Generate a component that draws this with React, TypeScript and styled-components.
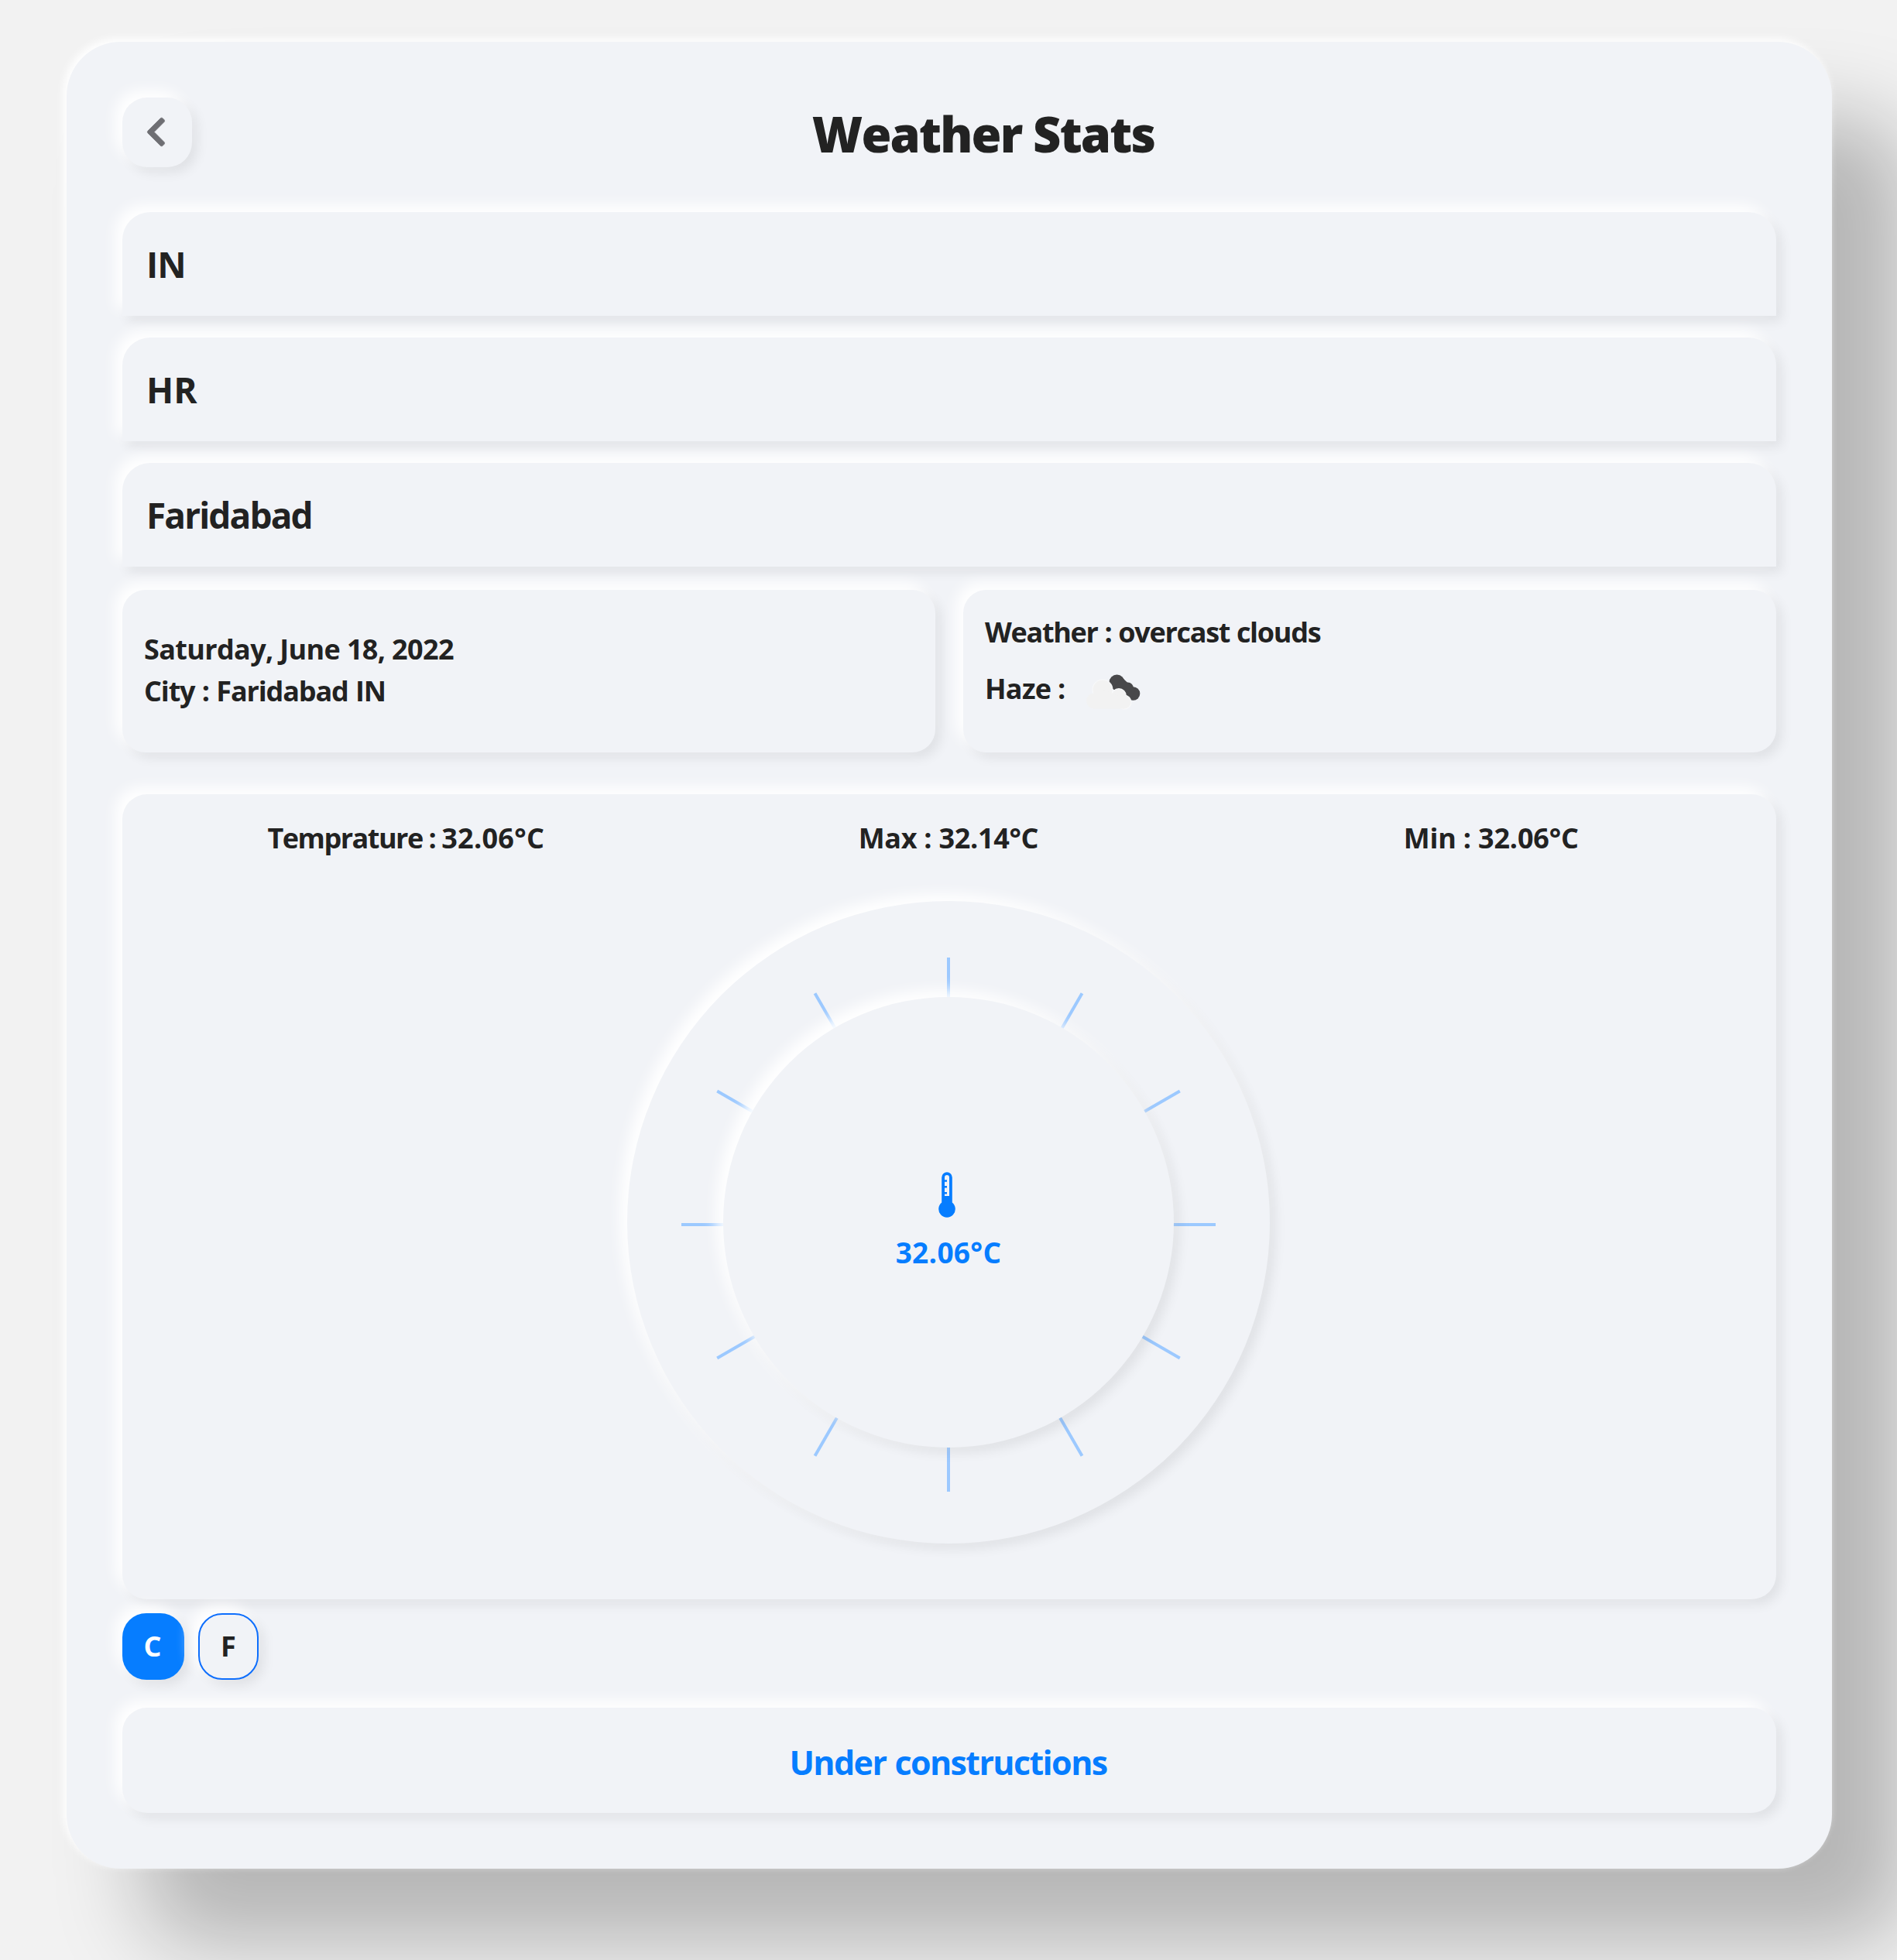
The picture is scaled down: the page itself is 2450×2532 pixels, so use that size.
import React from "react";
import styled, { createGlobalStyle, css } from "styled-components";
import { FaChevronLeft } from "react-icons/fa";

const surface = "#f1f3f7";
const ink = "#222222";
const blue = "#067dff";

const raised = css`
  background: ${surface};
  box-shadow: -9px -9px 18px #ffffff, 7px 7px 15px rgba(0, 0, 0, 0.075);
`;

const GlobalStyle = createGlobalStyle`
  *, *::before, *::after { box-sizing: border-box; }
  html, body { margin: 0; background: #f2f2f2; overflow: hidden; }
  body { font-family: "Open Sans", "Noto Sans", sans-serif; color: ${ink}; }
  h1, h2, p { margin: 0; }
`;

const Page = styled.main`
  height: 2532px;
  padding: 54px 84px 118px 86px;
`;

const Card = styled.section`
  display: flex;
  flex-direction: column;
  height: 2360px;
  padding: 72px;
  border-radius: 70px;
  background: ${surface};
  box-shadow: -4px -4px 11px #ffffff, 98px 98px 112px rgba(0, 0, 0, 0.25);
`;

const Header = styled.header`
  display: flex;
  align-items: center;
  height: 90px;
  margin-bottom: 58px;
`;

const BackButton = styled.button`
  ${raised}
  display: flex;
  align-items: center;
  justify-content: center;
  width: 90px;
  height: 90px;
  padding: 0 3px 2px 0;
  border: 0;
  border-radius: 32px;
  color: #6e6e73;
  svg { width: 27px; height: 43px; stroke: currentColor; stroke-width: 8px; }
`;

const Title = styled.h1`
  flex: 1;
  text-align: center;
  font-size: 63px;
  font-weight: 800;
  line-height: 90px;
  padding: 3px 2px 0 0;
  letter-spacing: -1.8px;
`;

const Places = styled.div`
  display: grid;
  gap: 28px;
  margin-bottom: 30px;
`;

const Place = styled.h2<{ $spacing?: number }>`
  ${raised}
  height: 134px;
  padding-left: 31px;
  border-radius: 36px 36px 0 0;
  font-size: 46px;
  font-weight: 700;
  line-height: 134px;
  letter-spacing: ${(p) => p.$spacing ?? 0}px;
`;

const InfoGrid = styled.div`
  display: grid;
  grid-template-columns: 1fr 1fr;
  gap: 36px;
  margin-bottom: 54px;
`;

const InfoCard = styled.div<{ $top: number }>`
  ${raised}
  height: 210px;
  padding: ${(p) => p.$top}px 28px 0;
  border-radius: 30px;
`;

const Line = styled.p<{ $spacing?: number; $words?: number }>`
  font-size: 36px;
  font-weight: 700;
  line-height: 54px;
  letter-spacing: ${(p) => p.$spacing ?? 0}px;
  word-spacing: ${(p) => p.$words ?? 0}px;
  white-space: nowrap;
`;

const Reading = styled.span`
  letter-spacing: 0.3px;
`;

const HazeRow = styled.div`
  display: grid;
  grid-template-columns: 104px 76px;
  align-items: center;
  gap: 24px;
  margin-top: 19px;
`;

const Panel = styled.section`
  ${raised}
  display: flex;
  flex-direction: column;
  align-items: center;
  height: 1040px;
  padding: 30px 18px 0 16px;
  border-radius: 32px;
`;

const Stats = styled.div`
  display: grid;
  grid-template-columns: repeat(3, 1fr);
  justify-items: center;
  width: 100%;
  margin-bottom: 54px;
`;

const Dial = styled.div`
  ${raised}
  display: grid;
  place-items: center;
  width: 830px;
  height: 830px;
  border-radius: 50%;
  > * { grid-area: 1 / 1; }
`;

const Knob = styled.div`
  ${raised}
  z-index: 1;
  display: flex;
  flex-direction: column;
  align-items: center;
  justify-content: center;
  gap: 18px;
  width: 582px;
  height: 582px;
  border-radius: 50%;
  color: ${blue};
  svg { margin-right: 4px; }
`;

const DialReading = styled.p`
  font-size: 37px;
  font-weight: 700;
  line-height: 54px;
  letter-spacing: 0.3px;
`;

const Units = styled.div`
  display: flex;
  gap: 18px;
  margin: 18px 0 36px;
`;

const UnitButton = styled.button<{ $active?: boolean }>`
  ${raised}
  width: ${(p) => (p.$active ? 80 : 78)}px;
  height: 86px;
  padding: ${(p) => (p.$active ? "0 2px 0 0" : "0")};
  border: ${(p) => (p.$active ? "0" : "2px solid #0d6efd")};
  border-radius: 31px;
  background: ${(p) => (p.$active ? blue : surface)};
  color: ${(p) => (p.$active ? "#ffffff" : ink)};
  font: 700 36px/1 "Open Sans", "Noto Sans", sans-serif;
`;

const Notice = styled.footer`
  ${raised}
  height: 136px;
  padding-right: 3px;
  border-radius: 32px;
  color: ${blue};
  font-size: 43px;
  font-weight: 700;
  line-height: 142px;
  letter-spacing: -1.6px;
  word-spacing: 1.5px;
  text-align: center;
`;

const CloudIcon = () => (
  <svg width="76" height="54" viewBox="0 0 76 54">
    <g fill="#48484a">
      <circle cx="42.500" cy="18.500" r="10" />
      <circle cx="56.500" cy="26" r="7.500" />
      <circle cx="63.500" cy="33" r="8.800" />
      <path d="M36 26L50 13L66 28L60 42z" />
    </g>
    <g fill="#f8f9fa" stroke="#f8f9fa" strokeWidth="2">
      <circle cx="24" cy="28" r="12.500" />
      <circle cx="45" cy="36" r="9" />
      <circle cx="52" cy="44" r="8.500" />
    </g>
    <g fill="#f2f2f2">
      <circle cx="24" cy="28" r="12.500" />
      <circle cx="45" cy="36" r="9" />
      <circle cx="52" cy="44" r="8.500" />
      <circle cx="13" cy="42.500" r="10" />
      <path d="M13 33L24 28L45 36L52 44V52.500H13z" />
    </g>
  </svg>
);

const ThermometerIcon = () => (
  <svg width="22" height="59" viewBox="0 0 22 59">
    <path
      d="M4.200 7a6.800 6.800 0 0 1 13.600 0V39.600a10.800 10.800 0 1 1-13.600 0z"
      fill="currentColor"
    />
    <path
      d="M8 31V28.500h3v-2.500H8v-5.500h3v-2.500H8v-5.300h3v-2.500H8V7a3 3 0 0 1 6 0v24z"
      fill={surface}
    />
  </svg>
);

const Ticks = () => (
  <svg width="830" height="830" viewBox="0 0 830 830">
    {Array.from({ length: 12 }, (_, i) => (
      <line
        key={i}
        x1="415"
        y1="73"
        x2="415"
        y2="140"
        stroke="#9cc9ff"
        strokeWidth="4"
        transform={`rotate(${i * 30} 415 418)`}
      />
    ))}
  </svg>
);

export default function App() {
  return (
    <Page>
      <GlobalStyle />
      <Card>
        <Header>
          <BackButton aria-label="Back">
            <FaChevronLeft />
          </BackButton>
          <Title>Weather Stats</Title>
        </Header>
        <Places>
          <Place $spacing={-1}>IN</Place>
          <Place>HR</Place>
          <Place $spacing={-1.9}>Faridabad</Place>
        </Places>
        <InfoGrid>
          <InfoCard $top={50}>
            <Line $spacing={-0.65}>Saturday, June 18, 2022</Line>
            <Line $spacing={-1.15} $words={1.2}>City : Faridabad IN</Line>
          </InfoCard>
          <InfoCard $top={28}>
            <Line $spacing={-1.3} $words={0.8}>Weather : overcast clouds</Line>
            <HazeRow>
              <Line $spacing={-0.7}>Haze :</Line>
              <CloudIcon />
            </HazeRow>
          </InfoCard>
        </InfoGrid>
        <Panel>
          <Stats>
            <Line $spacing={-1.5}>
              Temprature : <Reading>32.06°C</Reading>
            </Line>
            <Line $spacing={-0.3}>Max : 32.14°C</Line>
            <Line $spacing={-0.2}>Min : 32.06°C</Line>
          </Stats>
          <Dial>
            <Ticks />
            <Knob>
              <ThermometerIcon />
              <DialReading>32.06°C</DialReading>
            </Knob>
          </Dial>
        </Panel>
        <Units>
          <UnitButton $active>C</UnitButton>
          <UnitButton>F</UnitButton>
        </Units>
        <Notice>Under constructions</Notice>
      </Card>
    </Page>
  );
}
